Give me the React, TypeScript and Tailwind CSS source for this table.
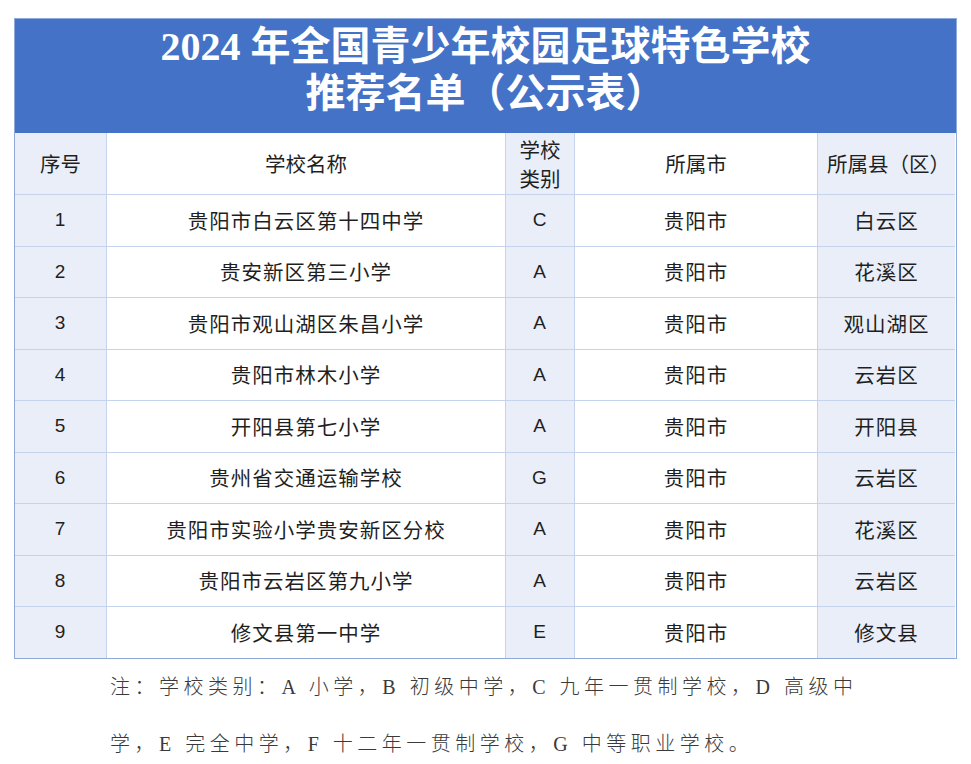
const rows = [
  ["1", "贵阳市白云区第十四中学", "C", "贵阳市", "白云区"],
  ["2", "贵安新区第三小学", "A", "贵阳市", "花溪区"],
  ["3", "贵阳市观山湖区朱昌小学", "A", "贵阳市", "观山湖区"],
  ["4", "贵阳市林木小学", "A", "贵阳市", "云岩区"],
  ["5", "开阳县第七小学", "A", "贵阳市", "开阳县"],
  ["6", "贵州省交通运输学校", "G", "贵阳市", "云岩区"],
  ["7", "贵阳市实验小学贵安新区分校", "A", "贵阳市", "花溪区"],
  ["8", "贵阳市云岩区第九小学", "A", "贵阳市", "云岩区"],
  ["9", "修文县第一中学", "E", "贵阳市", "修文县"],
];

const shade = [true, false, true, false, true];

const Cell = ({
  children,
  col,
  last,
}: {
  children: React.ReactNode;
  col: number;
  last?: boolean;
}) => (
  <div
    className={`flex items-center justify-center text-center border-[#c5d3ec] ${
      col < 4 ? "border-r" : ""
    } ${last ? "" : "border-b"} ${shade[col] ? "bg-[#e9eef8]" : "bg-white"}`}
  >
    {children}
  </div>
);

export default function App() {
  return (
    <div className="w-[971px] h-[764px] overflow-hidden bg-white pt-[18px] text-[#1f1f1f] font-['Noto_Sans_CJK_SC',sans-serif]">
      <div className="mx-[14px] border border-[#8fa9d9]">
        <div className="h-[114px] bg-[#4472c7] flex flex-col items-center justify-center text-white font-bold text-[40px] leading-[47px] font-['Liberation_Serif','Noto_Sans_CJK_SC',serif] pb-[12px]">
          <div>2024 年全国青少年校园足球特色学校</div>
          <div>推荐名单（公示表）</div>
        </div>
        <div className="grid grid-cols-[92px_399px_69px_243px_137px] text-[20.5px] tracking-[1px]">
          <div className="h-[62px] flex items-center justify-center bg-[#e9eef8] border-r border-b border-[#c5d3ec] tracking-[0px]">
            序号
          </div>
          <div className="flex items-center justify-center bg-white border-r border-b border-[#c5d3ec] tracking-[0px]">
            学校名称
          </div>
          <div className="flex items-center justify-center bg-[#e9eef8] border-r border-b border-[#c5d3ec] leading-[29px] text-center tracking-[0px]">
            学校
            <br />
            类别
          </div>
          <div className="flex items-center justify-center bg-white border-r border-b border-[#c5d3ec] tracking-[0px]">
            所属市
          </div>
          <div className="flex items-center justify-center bg-[#e9eef8] border-b border-[#c5d3ec] tracking-[0px] pl-[4px]">
            所属县（区）
          </div>
          {rows.map((r, i) =>
            r.map((v, c) => (
              <Cell key={`${i}-${c}`} col={c} last={i === rows.length - 1}>
                <span
                  className={`h-[50.5px] flex items-center ${
                    c === 0 || c === 2 ? "font-['Liberation_Sans',sans-serif] text-[19px]" : ""
                  }`}
                >
                  {v}
                </span>
              </Cell>
            ))
          )}
        </div>
      </div>
      <div className="pl-[110px] text-[20px] tracking-[4.5px] leading-[57px] text-[#3a3a3a] font-light font-['Liberation_Serif','Noto_Sans_CJK_SC',serif]">
        <div>注：学校类别：A 小学，B 初级中学，C 九年一贯制学校，D 高级中</div>
        <div>学，E 完全中学，F 十二年一贯制学校，G 中等职业学校。</div>
      </div>
    </div>
  );
}
